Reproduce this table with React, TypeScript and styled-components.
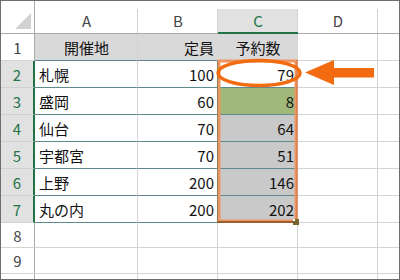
import styled, { createGlobalStyle } from 'styled-components';

const GlobalStyle = createGlobalStyle`
  * { box-sizing: border-box; }
  body {
    margin: 0;
    background: #ffffff;
    font-family: "Noto Sans CJK JP", "Noto Sans", sans-serif;
    overflow: hidden;
  }
`;

const TABLE_LINE = '#5e8a8e';
const GRID_LINE = '#d4d4d4';
const HEAD_LINE = '#ababab';
const GREEN = '#217346';
const ORANGE = '#f26b11';

type Row = { place: string; cap: number; res: number; fill: string };

const rows: Row[] = [
  { place: '札幌', cap: 100, res: 79, fill: '#ffffff' },
  { place: '盛岡', cap: 60, res: 8, fill: '#a0b87a' },
  { place: '仙台', cap: 70, res: 64, fill: '#c9c9c9' },
  { place: '宇都宮', cap: 70, res: 51, fill: '#c9c9c9' },
  { place: '上野', cap: 200, res: 146, fill: '#c9c9c9' },
  { place: '丸の内', cap: 200, res: 202, fill: '#c9c9c9' },
];

export default function App() {
  return (
    <>
      <GlobalStyle />
      <Frame>
        <Sheet>
          <Corner>
            <svg width="18" height="19" viewBox="0 0 18 19">
              <polygon points="1,18 17,18 17,2" fill="#d2d2d2" />
            </svg>
          </Corner>
          {['A', 'B', 'C', 'D', ''].map((c) => (
            <ColHead key={c || 'e'} $active={c === 'C'} $last={c === ''}>
              {c}
            </ColHead>
          ))}

          <RowHead>1</RowHead>
          <Cell $bg="#d9d9d9" $align="center" $bottom={TABLE_LINE} $right={GRID_LINE}>
            開催地
          </Cell>
          <Cell $bg="#d9d9d9" $align="right" $bottom={TABLE_LINE} $right="#d9d9d9">
            定員
          </Cell>
          <Cell $bg="#d9d9d9" $align="center" $bottom={TABLE_LINE} $right={GRID_LINE}>
            予約数
          </Cell>
          <Cell />
          <Cell $last />

          {rows.map((r, i) => (
            <RowGroup key={r.place} r={r} n={i + 2} />
          ))}

          {[8, 9, 10].map((n) => (
            <BlankRow key={n} n={n} />
          ))}
        </Sheet>

        <Overlay width="400" height="280" viewBox="0 0 400 280">
          <rect x="219" y="61" width="77" height="160" fill="none" stroke="#ec9562" strokeWidth="3" />
          <line x1="217" y1="222" x2="297" y2="222" stroke="#9c5e2e" strokeWidth="2" />
          <line x1="297" y1="60" x2="297" y2="222" stroke="#d9733c" strokeWidth="1" />
          <rect x="293" y="219" width="6" height="6" fill="#7a6430" />
          <rect x="293" y="219" width="2" height="2" fill="#ffffff" />
          <ellipse cx="259" cy="73" rx="41" ry="12.5" fill="none" stroke={ORANGE} strokeWidth="3.5" />
          <polygon points="305,72.5 334,60 334,68 374,68 374,77.5 334,77.5 334,85" fill={ORANGE} />
        </Overlay>
      </Frame>
    </>
  );
}

const RowGroup = ({ r, n }: { r: Row; n: number }) => (
  <>
    <RowHead $active>{n}</RowHead>
    <Cell $align="left" $bottom={TABLE_LINE} $right={GRID_LINE}>
      {r.place}
    </Cell>
    <Cell $align="right" $bottom={TABLE_LINE} $right={GREEN}>
      {r.cap}
    </Cell>
    <Cell $bg={r.fill} $align="right" $bottom={TABLE_LINE} $right={GRID_LINE}>
      {r.res}
    </Cell>
    <Cell />
    <Cell $last />
  </>
);

const BlankRow = ({ n }: { n: number }) => (
  <>
    <RowHead>{n}</RowHead>
    <Cell />
    <Cell />
    <Cell />
    <Cell />
    <Cell $last />
  </>
);

const Frame = styled('div')`
  position: relative;
  width: 400px;
  height: 280px;
  border: 1px solid #6e6e6e;
  overflow: hidden;
  background: #ffffff;
`;

const Sheet = styled('div')`
  display: grid;
  grid-template-columns: 34px 103px 80px 80px 80px 1fr;
  grid-template-rows: 33px repeat(7, 27px) 25px 26px 1fr;
  width: 100%;
  height: 100%;
`;

const Corner = styled('div')`
  display: flex;
  align-items: flex-end;
  justify-content: flex-end;
  padding: 0 2px 3px 0;
  border-right: 1px solid ${HEAD_LINE};
  border-bottom: 1px solid ${HEAD_LINE};
`;

const ColHead = styled('div')<{ $active?: boolean; $last?: boolean }>`
  position: relative;
  display: flex;
  align-items: center;
  justify-content: center;
  padding-top: 7px;
  font-size: 15px;
  color: ${({ $active }) => ($active ? GREEN : '#444444')};
  background: ${({ $active }) =>
    $active ? 'linear-gradient(#ffffff 0 8px, #e1e1e1 8px)' : '#ffffff'};
  border-bottom: ${({ $active }) => ($active ? `2px solid ${GREEN}` : `1px solid ${HEAD_LINE}`)};

  &::after {
    content: '';
    display: ${({ $last }) => ($last ? 'none' : 'block')};
    position: absolute;
    right: 0;
    top: 8px;
    bottom: 0;
    width: 1px;
    background: ${GRID_LINE};
  }
`;

const RowHead = styled('div')<{ $active?: boolean }>`
  display: flex;
  align-items: center;
  justify-content: center;
  font-size: 15px;
  color: ${({ $active }) => ($active ? GREEN : '#444444')};
  background: ${({ $active }) => ($active ? '#e1e1e1' : '#ffffff')};
  border-bottom: 1px solid ${({ $active }) => ($active ? '#d0d0d0' : GRID_LINE)};
  border-right: ${({ $active }) => ($active ? `2px solid ${GREEN}` : `1px solid ${HEAD_LINE}`)};
`;

const Cell = styled('div')<{
  $bg?: string;
  $align?: 'left' | 'center' | 'right';
  $bottom?: string;
  $right?: string;
  $last?: boolean;
}>`
  display: flex;
  align-items: center;
  justify-content: ${({ $align }) =>
    $align === 'right' ? 'flex-end' : $align === 'center' ? 'center' : 'flex-start'};
  padding: 1px 3px 0 4px;
  font-size: 15px;
  color: #111111;
  white-space: nowrap;
  background: ${({ $bg }) => $bg || '#ffffff'};
  border-bottom: 1px solid ${({ $bottom }) => $bottom || GRID_LINE};
  border-right: ${({ $last, $right }) => ($last ? 'none' : `1px solid ${$right || GRID_LINE}`)};
`;

const Overlay = styled('svg')`
  position: absolute;
  top: -1px;
  left: -1px;
  pointer-events: none;
`;
